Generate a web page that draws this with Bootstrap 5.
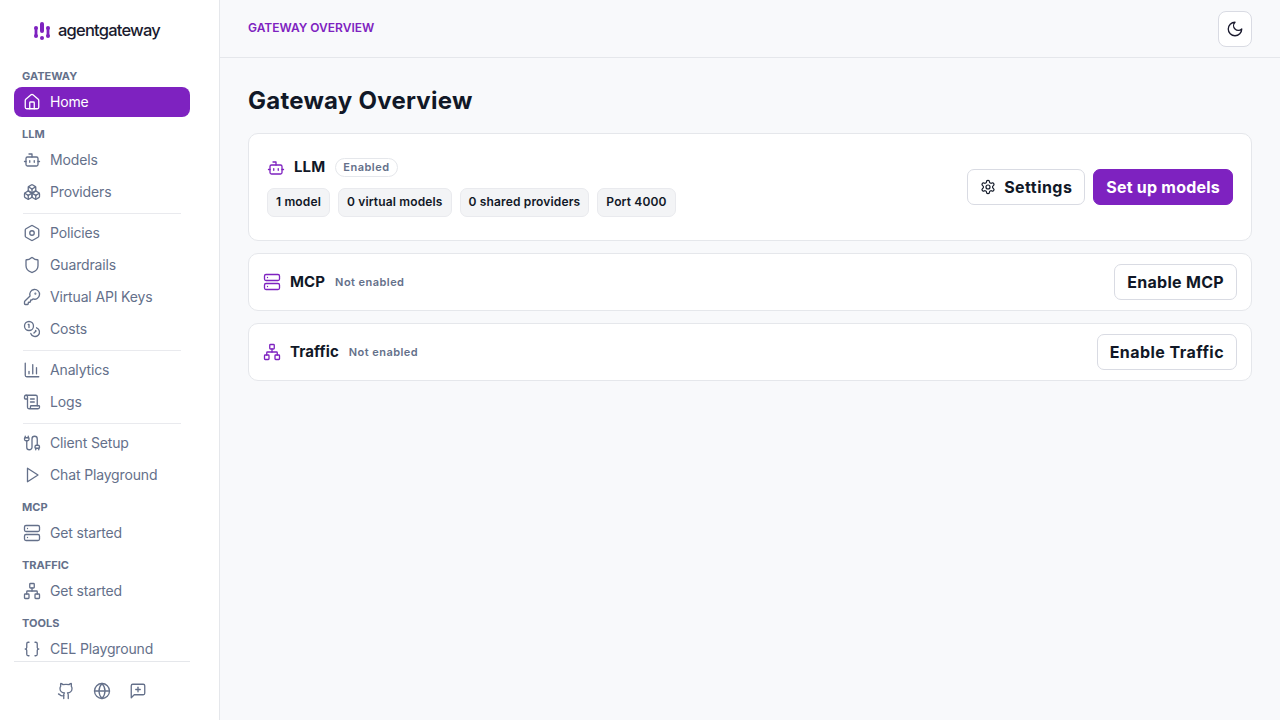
<!DOCTYPE html>
<html lang="en">
<head>
  <meta charset="UTF-8" />
  <meta name="viewport" content="width=device-width, initial-scale=1.0"/>
  <title>agentgateway - Gateway Overview</title>
  <link href="https://cdn.jsdelivr.net/npm/bootstrap@5.3.3/dist/css/bootstrap.min.css" rel="stylesheet">
  <style>
    html, body {
      height: 100%;
    }

    body {
      background: #f8f9fb;
      color: #111827;
      font-family: Inter, "Liberation Sans", sans-serif;
      overflow: hidden;
    }

    .ico {
      width: 18px;
      height: 18px;
      flex-shrink: 0;
      fill: none;
      stroke: currentColor;
      stroke-width: 1.75;
      stroke-linecap: round;
      stroke-linejoin: round;
    }

    /* sidebar */
    .side {
      width: 220px;
      flex-shrink: 0;
      background: #fff;
      border-right: 1px solid #e5e7eb;
    }

    .side-logo {
      height: 61px;
      padding: 0 0 0 33px;
      flex-shrink: 0;
    }

    .logo-text {
      font-size: 16.5px;
      font-weight: 500;
      letter-spacing: -0.78px;
      color: #1a1a2e;
      margin-left: 7px;
    }

    .side-scroll {
      overflow: hidden;
      min-height: 0;
      padding: 0 29px 0 14px;
    }

    .side-label {
      font-size: 11px;
      font-weight: 700;
      line-height: 16px;
      color: #64708a;
      padding: 7px 8px 3px;
      height: 26px;
    }

    .side-item {
      height: 30px;
      margin-bottom: 2px;
      padding: 0 9px 1px;
      gap: 9px;
      border-radius: 8px;
      font-size: 14px;
      letter-spacing: -0.15px;
      color: #64708a;
      text-decoration: none;
    }

    .side-item.is-active {
      background: #7e22c0;
      color: #fff;
    }

    .side-rule {
      height: 1px;
      background: #e9eaee;
      margin: 6px 9px 4px;
    }

    .side-foot {
      height: 59px;
      margin: 0 29px 0 14px;
      flex-shrink: 0;
      gap: 18px;
      border-top: 1px solid #e5e7eb;
      color: #64708a;
    }

    /* top bar + page */
    .topbar {
      height: 58px;
      flex-shrink: 0;
      padding: 0 28px;
      border-bottom: 1px solid #e5e7eb;
    }

    .crumb {
      font-size: 12px;
      font-weight: 600;
      color: #7e22c0;
      margin-bottom: 2px;
    }

    .theme-btn {
      width: 34px;
      height: 36px;
      background: #fff;
      border: 1px solid #d9dbe3;
      border-radius: 8px;
      color: #1a1a2e;
    }

    .page-body {
      padding: 28px 28px 0;
    }

    .page-title {
      font-size: 24px;
      font-weight: 700;
      letter-spacing: .25px;
      line-height: 30px;
      margin: 0 0 17px;
    }

    .gw-card {
      background: #fff;
      border: 1px solid #e5e7eb;
      border-radius: 10px;
      margin-bottom: 12px;
    }

    .gw-card.is-open {
      height: 108px;
      padding: 0 18px 1px;
    }

    .gw-card.is-closed {
      height: 58px;
      padding: 0 14px;
    }

    .gw-icon {
      color: #7e22c0;
      margin-right: 9px;
    }

    .gw-name {
      font-size: 15px;
      font-weight: 700;
      letter-spacing: .1px;
      margin-right: 10px;
    }

    .gw-head {
      margin-bottom: 9px;
    }

    .state-pill {
      font-size: 11px;
      font-weight: 600;
      letter-spacing: .5px;
      line-height: 17px;
      color: #64708a;
      border: 1px solid #e5e7eb;
      border-radius: 10px;
      padding: 0 7px;
    }

    .state-off {
      font-size: 11px;
      font-weight: 600;
      letter-spacing: .45px;
      color: #64708a;
    }

    .stat-chip {
      height: 29px;
      padding: 0 8px;
      font-size: 12px;
      font-weight: 600;
      letter-spacing: .15px;
      line-height: 25px;
      background: #f3f4f6;
      border: 1px solid #e9eaee;
      border-radius: 7px;
    }

    .act-btn {
      height: 36px;
      padding: 0 12px;
      font-size: 16px;
      font-weight: 700;
      letter-spacing: .3px;
      border-radius: 7px;
      background: #fff;
      border: 1px solid #d9dbe3;
      color: #111827;
    }

    .act-btn.act-wide {
      letter-spacing: .45px;
    }

    .act-btn .ico {
      width: 16px;
      height: 16px;
    }

    .act-btn.is-primary {
      background: #7e22c0;
      border-color: #7e22c0;
      color: #fff;
      letter-spacing: .22px;
    }
  </style>
</head>
<body>
  <svg width="0" height="0" class="position-absolute">
    <symbol id="i-house" viewBox="0 0 24 24"><path d="M15 21v-8a1 1 0 0 0-1-1h-4a1 1 0 0 0-1 1v8"/><path d="M3 10a2 2 0 0 1 .709-1.528l7-5.999a2 2 0 0 1 2.582 0l7 5.999A2 2 0 0 1 21 10v9a2 2 0 0 1-2 2H5a2 2 0 0 1-2-2z"/></symbol>
    <symbol id="i-bot" viewBox="0 0 24 24"><path d="M12 8V4H8"/><rect width="16" height="12" x="4" y="8" rx="2"/><path d="M2 14h2"/><path d="M20 14h2"/><path d="M15 13v2"/><path d="M9 13v2"/></symbol>
    <symbol id="i-boxes" viewBox="0 0 24 24"><path d="M2.97 12.92A2 2 0 0 0 2 14.63v3.24a2 2 0 0 0 .97 1.71l3 1.8a2 2 0 0 0 2.06 0L12 19v-5.5l-5-3-4.03 2.42Z"/><path d="m7 16.5-4.74-2.85"/><path d="m7 16.5 5-3"/><path d="M7 16.5v5.17"/><path d="M12 13.5V19l3.97 2.38a2 2 0 0 0 2.06 0l3-1.8a2 2 0 0 0 .97-1.71v-3.24a2 2 0 0 0-.97-1.71L17 10.5l-5 3Z"/><path d="m17 16.5-5-3"/><path d="m17 16.5 4.74-2.85"/><path d="M17 16.5v5.17"/><path d="M7.97 4.42A2 2 0 0 0 7 6.13v4.37l5 3 5-3V6.13a2 2 0 0 0-.97-1.71l-3-1.8a2 2 0 0 0-2.06 0l-3 1.8Z"/><path d="M12 8 7.26 5.15"/><path d="m12 8 4.74-2.85"/><path d="M12 13.5V8"/></symbol>
    <symbol id="i-hex" viewBox="0 0 24 24"><path d="M21 16V8a2 2 0 0 0-1-1.73l-7-4a2 2 0 0 0-2 0l-7 4A2 2 0 0 0 3 8v8a2 2 0 0 0 1 1.73l7 4a2 2 0 0 0 2 0l7-4A2 2 0 0 0 21 16z"/><circle cx="12" cy="12" r="3"/></symbol>
    <symbol id="i-shield" viewBox="0 0 24 24"><path d="M20 13c0 5-3.5 7.5-7.66 8.95a1 1 0 0 1-.67-.01C7.5 20.5 4 18 4 13V6a1 1 0 0 1 1-1c2 0 4.5-1.2 6.24-2.72a1.17 1.17 0 0 1 1.52 0C14.51 3.81 17 5 19 5a1 1 0 0 1 1 1z"/></symbol>
    <symbol id="i-key" viewBox="0 0 24 24"><path d="M2.586 17.414A2 2 0 0 0 2 18.828V21a1 1 0 0 0 1 1h3a1 1 0 0 0 1-1v-1a1 1 0 0 1 1-1h1a1 1 0 0 0 1-1v-1a1 1 0 0 1 1-1h.172a2 2 0 0 0 1.414-.586l.814-.814a6.5 6.5 0 1 0-4-4z"/><circle cx="16.5" cy="7.5" r=".5" fill="currentColor"/></symbol>
    <symbol id="i-coins" viewBox="0 0 24 24"><circle cx="8" cy="8" r="6"/><path d="M18.09 10.37A6 6 0 1 1 10.34 18"/><path d="M7 6h1v4"/><path d="m16.71 13.88.7.71-2.82 2.82"/></symbol>
    <symbol id="i-chart" viewBox="0 0 24 24"><path d="M3 3v16a2 2 0 0 0 2 2h16"/><path d="M18 17V9"/><path d="M13 17V5"/><path d="M8 17v-3"/></symbol>
    <symbol id="i-scroll" viewBox="0 0 24 24"><path d="M15 12h-5"/><path d="M15 8h-5"/><path d="M19 17V5a2 2 0 0 0-2-2H4"/><path d="M8 21h12a2 2 0 0 0 2-2v-1a1 1 0 0 0-1-1H11a1 1 0 0 0-1 1v1a2 2 0 1 1-4 0V5a2 2 0 1 0-4 0v2a1 1 0 0 0 1 1h3"/></symbol>
    <symbol id="i-cable" viewBox="0 0 24 24"><path d="M17 21v-2a1 1 0 0 1-1-1v-1a2 2 0 0 1 2-2h2a2 2 0 0 1 2 2v1a1 1 0 0 1-1 1"/><path d="M19 15V6.5a1 1 0 0 0-7 0v11a1 1 0 0 1-7 0V9"/><path d="M21 21v-2h-4"/><path d="M3 5h4V3"/><path d="M7 5a1 1 0 0 1 1 1v1a2 2 0 0 1-2 2H4a2 2 0 0 1-2-2V6a1 1 0 0 1 1-1V3"/></symbol>
    <symbol id="i-play" viewBox="0 0 24 24"><polygon points="6 3 20 12 6 21 6 3"/></symbol>
    <symbol id="i-server" viewBox="0 0 24 24"><rect width="20" height="8" x="2" y="2" rx="2" ry="2"/><rect width="20" height="8" x="2" y="14" rx="2" ry="2"/><line x1="6" x2="6.01" y1="6" y2="6"/><line x1="6" x2="6.01" y1="18" y2="18"/></symbol>
    <symbol id="i-network" viewBox="0 0 24 24"><rect x="16" y="16" width="6" height="6" rx="1"/><rect x="2" y="16" width="6" height="6" rx="1"/><rect x="9" y="2" width="6" height="6" rx="1"/><path d="M5 16v-3a1 1 0 0 1 1-1h12a1 1 0 0 1 1 1v3"/><path d="M12 12V8"/></symbol>
    <symbol id="i-braces" viewBox="0 0 24 24"><path d="M8 3H7a2 2 0 0 0-2 2v5a2 2 0 0 1-2 2 2 2 0 0 1 2 2v5c0 1.1.9 2 2 2h1"/><path d="M16 21h1a2 2 0 0 0 2-2v-5c0-1.1.9-2 2-2a2 2 0 0 1-2-2V5a2 2 0 0 0-2-2h-1"/></symbol>
    <symbol id="i-github" viewBox="0 0 24 24"><path d="M15 22v-4a4.8 4.8 0 0 0-1-3.5c3 0 6-2 6-5.5.08-1.25-.27-2.48-1-3.5.28-1.15.28-2.35 0-3.5 0 0-1 0-3 1.5-2.64-.5-5.36-.5-8 0C6 2 5 2 5 2c-.3 1.15-.3 2.35 0 3.5A5.403 5.403 0 0 0 4 9c0 3.5 3 5.5 6 5.5-.39.49-.68 1.05-.85 1.65-.17.6-.22 1.23-.15 1.85v4"/><path d="M9 18c-4.51 2-5-2-7-2"/></symbol>
    <symbol id="i-globe" viewBox="0 0 24 24"><circle cx="12" cy="12" r="10"/><path d="M12 2a14.5 14.5 0 0 0 0 20 14.5 14.5 0 0 0 0-20"/><path d="M2 12h20"/></symbol>
    <symbol id="i-msg" viewBox="0 0 24 24"><path d="M21 15a2 2 0 0 1-2 2H7l-4 4V5a2 2 0 0 1 2-2h14a2 2 0 0 1 2 2z"/><path d="M12 7v6"/><path d="M9 10h6"/></symbol>
    <symbol id="i-moon" viewBox="0 0 24 24"><path d="M12 3a6 6 0 0 0 9 9 9 9 0 1 1-9-9Z"/></symbol>
    <symbol id="i-gear" viewBox="0 0 24 24"><path d="M12.22 2h-.44a2 2 0 0 0-2 2v.18a2 2 0 0 1-1 1.73l-.43.25a2 2 0 0 1-2 0l-.15-.08a2 2 0 0 0-2.73.73l-.22.38a2 2 0 0 0 .73 2.73l.15.1a2 2 0 0 1 1 1.72v.51a2 2 0 0 1-1 1.74l-.15.09a2 2 0 0 0-.73 2.73l.22.38a2 2 0 0 0 2.73.73l.15-.08a2 2 0 0 1 2 0l.43.25a2 2 0 0 1 1 1.73V20a2 2 0 0 0 2 2h.44a2 2 0 0 0 2-2v-.18a2 2 0 0 1 1-1.73l.43-.25a2 2 0 0 1 2 0l.15.08a2 2 0 0 0 2.73-.73l.22-.39a2 2 0 0 0-.73-2.73l-.15-.08a2 2 0 0 1-1-1.74v-.5a2 2 0 0 1 1-1.74l.15-.09a2 2 0 0 0 .73-2.73l-.22-.38a2 2 0 0 0-2.73-.73l-.15.08a2 2 0 0 1-2 0l-.43-.25a2 2 0 0 1-1-1.73V4a2 2 0 0 0-2-2z"/><circle cx="12" cy="12" r="3"/></symbol>
  </svg>

  <div class="d-flex vh-100">
    <aside class="side d-flex flex-column">
      <div class="side-logo d-flex align-items-center">
        <svg width="18" height="20" viewBox="0 0 18 20" fill="#7e22c0">
          <circle cx="3" cy="7" r="2"/>
          <rect x="1.6" y="7" width="2.8" height="8"/>
          <circle cx="3" cy="15" r="2"/>
          <rect x="7" y="1" width="4" height="11" rx="2"/>
          <circle cx="9" cy="17" r="2"/>
          <circle cx="15" cy="7" r="2"/>
          <rect x="13.6" y="7" width="2.8" height="8"/>
          <circle cx="15" cy="15" r="2"/>
        </svg>
        <span class="logo-text">agentgateway</span>
      </div>

      <nav class="side-scroll flex-grow-1">
        <div class="side-label">GATEWAY</div>
        <a class="side-item is-active d-flex align-items-center" href="#"><svg class="ico"><use href="#i-house"/></svg>Home</a>

        <div class="side-label">LLM</div>
        <a class="side-item d-flex align-items-center" href="#"><svg class="ico"><use href="#i-bot"/></svg>Models</a>
        <a class="side-item d-flex align-items-center" href="#"><svg class="ico"><use href="#i-boxes"/></svg>Providers</a>
        <div class="side-rule"></div>
        <a class="side-item d-flex align-items-center" href="#"><svg class="ico"><use href="#i-hex"/></svg>Policies</a>
        <a class="side-item d-flex align-items-center" href="#"><svg class="ico"><use href="#i-shield"/></svg>Guardrails</a>
        <a class="side-item d-flex align-items-center" href="#"><svg class="ico"><use href="#i-key"/></svg>Virtual API Keys</a>
        <a class="side-item d-flex align-items-center" href="#"><svg class="ico"><use href="#i-coins"/></svg>Costs</a>
        <div class="side-rule"></div>
        <a class="side-item d-flex align-items-center" href="#"><svg class="ico"><use href="#i-chart"/></svg>Analytics</a>
        <a class="side-item d-flex align-items-center" href="#"><svg class="ico"><use href="#i-scroll"/></svg>Logs</a>
        <div class="side-rule"></div>
        <a class="side-item d-flex align-items-center" href="#"><svg class="ico"><use href="#i-cable"/></svg>Client Setup</a>
        <a class="side-item d-flex align-items-center" href="#"><svg class="ico"><use href="#i-play"/></svg>Chat Playground</a>

        <div class="side-label">MCP</div>
        <a class="side-item d-flex align-items-center" href="#"><svg class="ico"><use href="#i-server"/></svg>Get started</a>

        <div class="side-label">TRAFFIC</div>
        <a class="side-item d-flex align-items-center" href="#"><svg class="ico"><use href="#i-network"/></svg>Get started</a>

        <div class="side-label">TOOLS</div>
        <a class="side-item d-flex align-items-center" href="#"><svg class="ico"><use href="#i-braces"/></svg>CEL Playground</a>
      </nav>

      <div class="side-foot d-flex align-items-center justify-content-center">
        <svg class="ico"><use href="#i-github"/></svg>
        <svg class="ico"><use href="#i-globe"/></svg>
        <svg class="ico"><use href="#i-msg"/></svg>
      </div>
    </aside>

    <div class="flex-grow-1 d-flex flex-column">
      <header class="topbar d-flex align-items-center justify-content-between">
        <span class="crumb">GATEWAY OVERVIEW</span>
        <button class="theme-btn d-flex align-items-center justify-content-center p-0" type="button"><svg class="ico"><use href="#i-moon"/></svg></button>
      </header>

      <main class="page-body">
        <h1 class="page-title">Gateway Overview</h1>

        <div class="gw-card is-open d-flex align-items-center justify-content-between">
          <div>
            <div class="gw-head d-flex align-items-center">
              <svg class="ico gw-icon"><use href="#i-bot"/></svg>
              <span class="gw-name">LLM</span>
              <span class="state-pill">Enabled</span>
            </div>
            <div class="d-flex gap-2">
              <span class="stat-chip">1 model</span>
              <span class="stat-chip">0 virtual models</span>
              <span class="stat-chip">0 shared providers</span>
              <span class="stat-chip">Port 4000</span>
            </div>
          </div>
          <div class="d-flex gap-2">
            <button class="act-btn act-wide d-flex align-items-center gap-2" type="button"><svg class="ico"><use href="#i-gear"/></svg>Settings</button>
            <button class="act-btn is-primary" type="button">Set up models</button>
          </div>
        </div>

        <div class="gw-card is-closed d-flex align-items-center justify-content-between">
          <div class="d-flex align-items-center">
            <svg class="ico gw-icon"><use href="#i-server"/></svg>
            <span class="gw-name">MCP</span>
            <span class="state-off">Not enabled</span>
          </div>
          <button class="act-btn" type="button">Enable MCP</button>
        </div>

        <div class="gw-card is-closed d-flex align-items-center justify-content-between">
          <div class="d-flex align-items-center">
            <svg class="ico gw-icon"><use href="#i-network"/></svg>
            <span class="gw-name">Traffic</span>
            <span class="state-off">Not enabled</span>
          </div>
          <button class="act-btn act-wide" type="button">Enable Traffic</button>
        </div>
      </main>
    </div>
  </div>

  <script src="https://cdn.jsdelivr.net/npm/bootstrap@5.3.3/dist/js/bootstrap.bundle.min.js"></script>
</body>
</html>
